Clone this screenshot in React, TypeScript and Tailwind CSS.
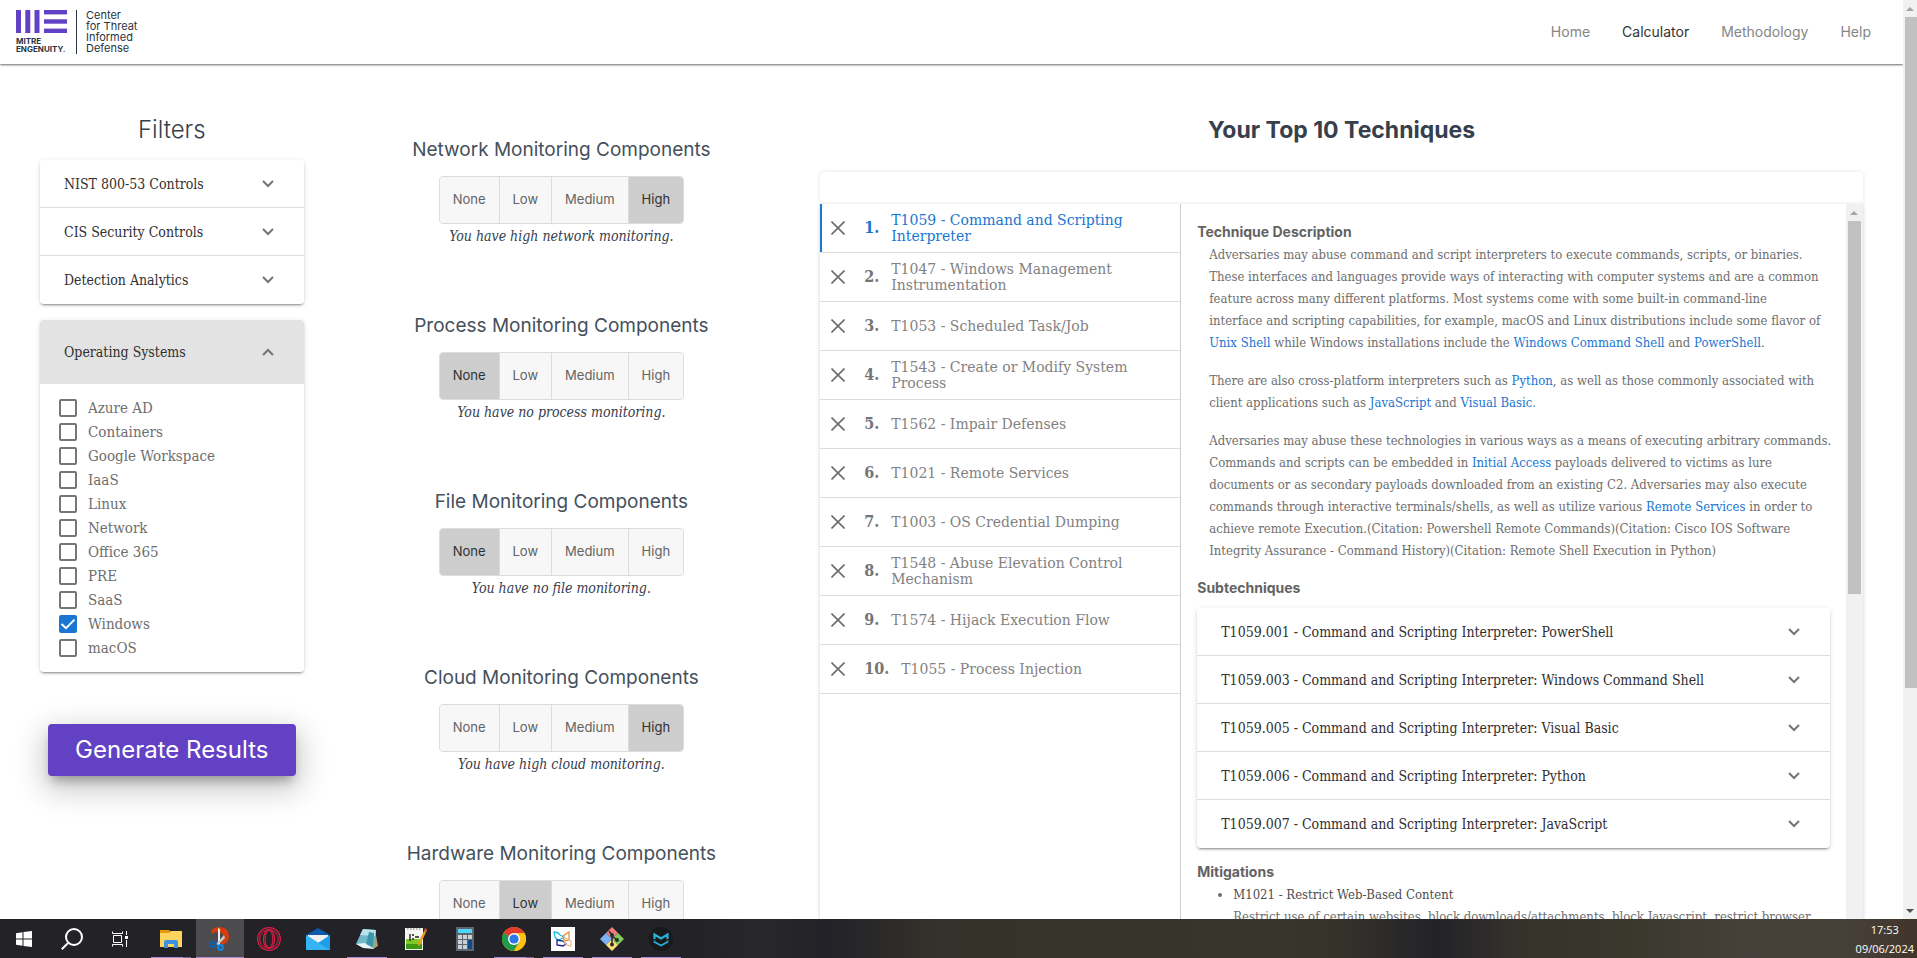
import { useState } from "react";
import type { ReactNode } from "react";

const levels = ["None", "Low", "Medium", "High"];

const monitors = [
  { name: "Network", level: "High" },
  { name: "Process", level: "None" },
  { name: "File", level: "None" },
  { name: "Cloud", level: "High" },
  { name: "Hardware", level: "Low" },
];

const systems = [
  "Azure AD",
  "Containers",
  "Google Workspace",
  "IaaS",
  "Linux",
  "Network",
  "Office 365",
  "PRE",
  "SaaS",
  "Windows",
  "macOS",
];

const techniques = [
  "T1059 - Command and Scripting Interpreter",
  "T1047 - Windows Management Instrumentation",
  "T1053 - Scheduled Task/Job",
  "T1543 - Create or Modify System Process",
  "T1562 - Impair Defenses",
  "T1021 - Remote Services",
  "T1003 - OS Credential Dumping",
  "T1548 - Abuse Elevation Control Mechanism",
  "T1574 - Hijack Execution Flow",
  "T1055 - Process Injection",
];

const subtechniques = [
  "T1059.001 - Command and Scripting Interpreter: PowerShell",
  "T1059.003 - Command and Scripting Interpreter: Windows Command Shell",
  "T1059.005 - Command and Scripting Interpreter: Visual Basic",
  "T1059.006 - Command and Scripting Interpreter: Python",
  "T1059.007 - Command and Scripting Interpreter: JavaScript",
];

const cardShadow =
  "shadow-[0_3px_1px_-2px_rgba(0,0,0,0.2),0_2px_2px_0_rgba(0,0,0,0.14),0_1px_5px_0_rgba(0,0,0,0.12)]";

function Chevron({ up = false }: { up?: boolean }) {
  return (
    <svg width="12" height="8" viewBox="0 0 12 8" fill="none" stroke="#757575" strokeWidth="2" aria-hidden="true">
      <path d={up ? "M1 7 L6 2 L11 7" : "M1 1 L6 6 L11 1"} />
    </svg>
  );
}

function AccordionRow({ label }: { label: string }) {
  return (
    <button type="button" className="flex h-12 w-full items-center justify-between pr-[30px] pl-6 text-left text-sm text-[#303030]">
      <span>{label}</span>
      <Chevron />
    </button>
  );
}

function Logo() {
  return (
    <a href="#home" aria-label="Center for Threat Informed Defense" className="flex items-stretch text-[#2a3440]">
      <span className="flex flex-col gap-1">
        <svg width="51" height="23" viewBox="0 0 51 23" fill="#6241c5" aria-hidden="true">
          <rect x="0" y="0" width="5" height="23" />
          <rect x="9.3" y="0" width="5" height="23" />
          <rect x="18.5" y="0" width="5" height="23" />
          <rect x="28" y="0" width="23" height="4.4" />
          <rect x="28" y="9.3" width="23" height="4.4" />
          <rect x="28" y="18.6" width="23" height="4.4" />
        </svg>
        <span className="text-[8px] leading-[8px] font-bold">
          MITRE
          <br />
          ENGENUITY.
        </span>
      </span>
      <span className="ml-[9px] w-px bg-[#2a3440]" />
      <span className="ml-[9px] text-[11px] leading-[11px]">
        Center
        <br />
        for Threat
        <br />
        Informed
        <br />
        Defense
      </span>
    </a>
  );
}

function Header() {
  const links = ["Home", "Calculator", "Methodology", "Help"];
  return (
    <header className="z-10 flex h-16 shrink-0 items-center justify-between bg-white pr-8 pl-4 shadow-[0_1px_2px_0_rgba(0,0,0,0.6)]">
      <Logo />
      <nav className="flex gap-8 text-sm">
        {links.map((l) => (
          <a key={l} href={"#" + l.toLowerCase()} className={l === "Calculator" ? "text-[#333]" : "text-[#858585]"}>
            {l}
          </a>
        ))}
      </nav>
    </header>
  );
}

function Filters() {
  return (
    <section className="w-[18%] pt-[50px] pr-[39px] pl-10">
      <h2 className="mb-[14px] text-center text-2xl leading-8 font-light text-[#36404c]">Filters</h2>
      <div className={"divide-y divide-[#dedede] rounded bg-white font-['DejaVu_Serif_Condensed','DejaVu_Serif',serif] " + cardShadow}>
        <AccordionRow label="NIST 800-53 Controls" />
        <AccordionRow label="CIS Security Controls" />
        <AccordionRow label="Detection Analytics" />
      </div>
      <div className={"mt-4 overflow-hidden rounded bg-white font-['DejaVu_Serif_Condensed','DejaVu_Serif',serif] " + cardShadow}>
        <button type="button" className="flex h-16 w-full items-center justify-between bg-[#e3e3e3] pr-[30px] pl-6 text-sm text-[#303030]">
          <span>Operating Systems</span>
          <Chevron up />
        </button>
        <div className="py-3 pl-[19px]">
          {systems.map((s) => (
            <label key={s} className="flex h-6 items-center gap-[11px] text-[15px] text-[#6e6e6e]">
              <span className="grid size-[18px] place-items-center">
                <input
                  type="checkbox"
                  defaultChecked={s === "Windows"}
                  className="peer col-start-1 row-start-1 size-[18px] appearance-none rounded-xs border-2 border-[#757575] checked:border-[#1976d2] checked:bg-[#1976d2]"
                />
                <svg
                  width="18"
                  height="18"
                  viewBox="0 0 18 18"
                  fill="none"
                  stroke="#fff"
                  strokeWidth="2"
                  className="pointer-events-none invisible col-start-1 row-start-1 peer-checked:visible"
                  aria-hidden="true"
                >
                  <path d="M2.5 9 L7 13.2 L15.5 4.6" />
                </svg>
              </span>
              {s}
            </label>
          ))}
        </div>
      </div>
      <div className="mt-[52px] px-2">
        <button
          type="button"
          className="h-[52px] w-full rounded bg-[#6241c5] text-2xl text-white shadow-[0_8px_10px_-4px_rgba(0,0,0,0.3),0_10px_30px_4px_rgba(0,0,0,0.22)]"
        >
          Generate Results
        </button>
      </div>
    </section>
  );
}

function Monitor({ name, initial }: { name: string; initial: string }) {
  const [level, setLevel] = useState(initial);
  return (
    <div className="mb-16 flex flex-col items-center">
      <h3 className="text-[19px] leading-7 text-[#45505c]">{name} Monitoring Components</h3>
      <div className="mt-3 flex h-12 divide-x divide-[#dcdcdc] overflow-hidden rounded border border-[#dcdcdc]">
        {levels.map((l) => (
          <button
            key={l}
            type="button"
            aria-pressed={l === level}
            onClick={() => setLevel(l)}
            className={"px-[13px] text-[13px] " + (l === level ? "bg-[#cdcdcd] text-[#303030]" : "bg-[#f7f7f7] text-[#636363]")}
          >
            {l}
          </button>
        ))}
      </div>
      <p className="font-['DejaVu_Serif_Condensed','DejaVu_Serif',serif] text-sm leading-6 text-[#36404c] italic">
        You have {level === "None" ? "no" : level.toLowerCase()} {name.toLowerCase()} monitoring.
      </p>
    </div>
  );
}

function Ref({ children }: { children: ReactNode }) {
  return (
    <a href="#technique" className="text-[#1976d2]">
      {children}
    </a>
  );
}

function ScrollArrow({ down = false, dark = false }: { down?: boolean; dark?: boolean }) {
  return (
    <svg width="8" height="4" viewBox="0 0 8 4" fill={dark ? "#505050" : "#a3a3a3"} aria-hidden="true">
      <path d={down ? "M0 0H8L4 4Z" : "M0 4H8L4 0Z"} />
    </svg>
  );
}

function Results() {
  return (
    <section className="flex w-[59%] flex-col px-10 pt-[50px]">
      <h2 className="text-center text-[23px] leading-8 font-bold text-[#36404c]">Your Top 10 Techniques</h2>
      <div className="mt-[26px] h-8 shrink-0 rounded bg-white shadow-[0_0_4px_0_rgba(0,0,0,0.12)]" />
      <div className="flex min-h-0 flex-1 bg-white shadow-[0_1px_4px_0_rgba(0,0,0,0.2)]">
        <ol className="w-[361px] shrink-0 border-r border-[#d0d0d0] font-['DejaVu_Serif',serif]">
          {techniques.map((t, i) => (
            <li
              key={t}
              className={
                "flex h-[49px] items-center border-b border-[#dcdcdc] pl-[11px] " +
                (i === 0 ? "text-[#1976d2] shadow-[inset_2px_0_0_#1976d2]" : "text-[#828282]")
              }
            >
              <button type="button" aria-label={"Remove " + t} className="mr-[19px]">
                <svg width="14" height="14" viewBox="0 0 14 14" stroke="#6b6b6b" strokeWidth="1.6" aria-hidden="true">
                  <path d="M0.5 0.5 L13.5 13.5 M13.5 0.5 L0.5 13.5" />
                </svg>
              </button>
              <span className={"mr-3 text-base font-bold font-['DejaVu_Serif_Condensed','DejaVu_Serif',serif] " + (i === 0 ? "" : "text-[#757575]")}>
                {i + 1}.
              </span>
              <a href="#technique" className="flex-1 text-sm leading-4">
                {t}
              </a>
            </li>
          ))}
        </ol>
        <article className="min-w-0 flex-1 overflow-hidden px-4 pt-4 font-['DejaVu_Serif_Condensed','DejaVu_Serif',serif] text-[13px] leading-[22px] text-[#6e6e6e]">
          <h3 className="font-['Inter',sans-serif] text-sm leading-6 font-bold text-[#636363]">Technique Description</h3>
          <div className="-mr-3 flex flex-col gap-4 pl-3">
            <p>
              Adversaries may abuse command and script interpreters to execute commands, scripts, or binaries.
              <br />
              These interfaces and languages provide ways of interacting with computer systems and are a common
              <br />
              feature across many different platforms. Most systems come with some built-in command-line
              <br />
              interface and scripting capabilities, for example, macOS and Linux distributions include some flavor of
              <br />
              <Ref>Unix Shell</Ref> while Windows installations include the <Ref>Windows Command Shell</Ref> and{" "}
              <Ref>PowerShell</Ref>.
            </p>
            <p>
              There are also cross-platform interpreters such as <Ref>Python</Ref>, as well as those commonly
              associated with
              <br />
              client applications such as <Ref>JavaScript</Ref> and <Ref>Visual Basic</Ref>.
            </p>
            <p>
              Adversaries may abuse these technologies in various ways as a means of executing arbitrary commands.
              <br />
              Commands and scripts can be embedded in <Ref>Initial Access</Ref> payloads delivered to victims as lure
              <br />
              documents or as secondary payloads downloaded from an existing C2. Adversaries may also execute
              <br />
              commands through interactive terminals/shells, as well as utilize various <Ref>Remote Services</Ref> in
              order to
              <br />
              achieve remote Execution.(Citation: Powershell Remote Commands)(Citation: Cisco IOS Software
              <br />
              Integrity Assurance - Command History)(Citation: Remote Shell Execution in Python)
            </p>
          </div>
          <h3 className="mt-[14px] font-['Inter',sans-serif] text-sm leading-6 font-bold text-[#636363]">Subtechniques</h3>
          <div className={"mt-2 divide-y divide-[#dedede] rounded bg-white " + cardShadow}>
            {subtechniques.map((s) => (
              <AccordionRow key={s} label={s} />
            ))}
          </div>
          <h3 className="mt-3 font-['Inter',sans-serif] text-sm leading-6 font-bold text-[#636363]">Mitigations</h3>
          <ul className="list-disc pl-9">
            <li>
              <strong className="font-medium text-[#4d4d4d]">M1021 - Restrict Web-Based Content</strong>
              <p>Restrict use of certain websites, block downloads/attachments, block Javascript, restrict browser</p>
            </li>
          </ul>
        </article>
        <div className="flex w-[17px] shrink-0 flex-col items-center bg-[#f1f1f1]">
          <div className="flex h-[17px] shrink-0 items-center">
            <ScrollArrow />
          </div>
          <div className="h-[373px] w-[13px] bg-[#c1c1c1]" />
        </div>
      </div>
    </section>
  );
}

const icons: { name: string; art: ReactNode; active?: boolean; open?: boolean; stacked?: boolean }[] = [
  {
    name: "File Explorer",
    open: true,
    stacked: true,
    art: (
      <>
        <path d="M1 3h9l2 2h10v3H1z" fill="#e39b0b" />
        <path d="M1 6h9l2-2h11v16H1z" fill="#ffd560" />
        <path d="M5 21v-6q0-2 2-2h10q2 0 2 2v6h-4v-4H9v4z" fill="#3c92dc" />
      </>
    ),
  },
  {
    name: "Snipping Tool",
    active: true,
    open: true,
    art: (
      <>
        <path d="M3 5q1-5 9-5 9 1 9 9 0 8-8 9l-1-4q4-1 4-4-1-5-7-5-3 0-4 2z" fill="#d63b0b" />
        <path d="M10 1l2 1v16h-2z" fill="#eceff1" />
        <path d="M16 8l1 3-7 7-2-1z" fill="#c4c9cd" />
        <circle cx="5" cy="17.5" r="2.7" fill="none" stroke="#0a63b5" strokeWidth="2.2" />
        <circle cx="12.5" cy="20.5" r="2.3" fill="none" stroke="#1287dd" strokeWidth="2.2" />
      </>
    ),
  },
  {
    name: "Opera",
    art: (
      <g fill="none" stroke="#e21d48">
        <circle cx="12" cy="12" r="11.3" strokeWidth="1.2" />
        <circle cx="12" cy="12" r="9.3" strokeWidth="1" />
        <ellipse cx="12" cy="12" rx="5.5" ry="9.5" strokeWidth="1.2" />
        <ellipse cx="12" cy="12" rx="3.8" ry="8.5" strokeWidth="1" />
      </g>
    ),
  },
  {
    name: "Mail",
    art: (
      <>
        <path d="M0 8L12 1l12 7v3H0z" fill="#0b5cad" />
        <path d="M2 8h20v10H2z" fill="#f1f1f1" />
        <path d="M0 8l12 8 12-8v15H0z" fill="#1e9de8" />
        <path d="M0 8l24 15H0z" fill="#35b5f3" />
      </>
    ),
  },
  {
    name: "Notepad",
    open: true,
    art: (
      <>
        <path d="M20 3l3 16-5 3z" fill="#b59a68" />
        <path d="M8 2l13 1-2 19-18-5z" fill="#6fb9ca" />
        <path d="M8 2l13 1-1 6-15-1z" fill="#b9e3ea" />
        <path d="M1 17l9-1 9 6-11-1z" fill="#e9f3f4" />
        <path d="M14 5l5 1-1 14-7-3z" fill="#3e95aa" />
      </>
    ),
  },
  {
    name: "Notepad++",
    art: (
      <>
        <path d="M1 1h18v22H1z" fill="#f4f6f2" />
        <path d="M2 12h16v10H2z" fill="#7ccb25" />
        <path d="M2 17h16v5H2z" fill="#3c9b12" />
        <path d="M3 2h14" stroke="#777" strokeDasharray="1.5 1.5" />
        <path d="M6 7v7M8 8h2M8 12h2M11 10h4" stroke="#222" strokeWidth="1.4" />
        <path d="M21 2l2 1-7 15-2 1v-3z" fill="#e5a024" />
        <path d="M21 1l2 1-1 3-2-1z" fill="#c3453a" />
      </>
    ),
  },
  {
    name: "Calculator",
    art: (
      <>
        <path d="M3 0h18v24H3z" fill="#5d6670" />
        <path d="M5 2h14v4H5z" fill="#4fd5f7" />
        <path d="M5 8h4v4H5zM10 8h4v4h-4zM15 8h4v4h-4zM5 13h4v4H5zM10 13h4v4h-4zM5 18h4v4H5zM10 18h4v4h-4z" fill="#ccd1d5" />
        <path d="M15 13h4v9h-4z" fill="#0c4c8c" />
      </>
    ),
  },
  {
    name: "Chrome",
    open: true,
    stacked: true,
    art: (
      <>
        <circle cx="12" cy="12" r="12" fill="#fbc116" />
        <path d="M12 12L1.6 6A12 12 0 0 1 22.4 6z" fill="#e33b2e" />
        <path d="M12 12L1.6 6A12 12 0 0 0 12 24l5.2-9z" fill="#229a4b" />
        <path d="M12 6h10.4A12 12 0 0 1 12 24l5.2-9z" fill="#fbc116" />
        <circle cx="12" cy="12" r="6" fill="#fff" />
        <circle cx="12" cy="12" r="4.6" fill="#2f76e8" />
      </>
    ),
  },
  {
    name: "Diagram editor",
    open: true,
    art: (
      <>
        <path d="M0 0h24v24H0z" fill="#fff" />
        <g fill="none" strokeWidth="1.3">
          <path d="M3 5q4 0 6 3l4 2-5 3q-5-1-5-8z" stroke="#17c3e4" />
          <path d="M12 9l6-4v8l-5 1z" stroke="#f08c34" />
          <path d="M6 13l6 1 3 3-3 2-6-1z" stroke="#15208c" />
          <path d="M14 11l6 3v5q-5 0-7-5z" stroke="#f3b98a" />
        </g>
      </>
    ),
  },
  {
    name: "Git",
    open: true,
    art: (
      <>
        <path d="M12 0l6 6-6 6-6-6z" fill="#ef7d7d" />
        <path d="M18 6l6 6-6 6-6-6z" fill="#7fca5a" />
        <path d="M6 6l6 6-6 6-6-6z" fill="#7cb0f7" />
        <path d="M12 12l6 6-6 6-6-6z" fill="#ffe07a" />
        <path d="M9 4l3 4v9M12 9l5 4" stroke="#2b2b2b" strokeWidth="1.5" fill="none" />
        <g fill="#2b2b2b">
          <circle cx="12" cy="8" r="2" />
          <circle cx="17" cy="13" r="2" />
          <circle cx="12" cy="17.5" r="2" />
        </g>
      </>
    ),
  },
  {
    name: "Terminal client",
    open: true,
    art: (
      <>
        <circle cx="12" cy="12" r="12" fill="#17191b" />
        <g fill="none" stroke="#29aed8" strokeWidth="2.2">
          <path d="M5.5 12V7.5l6.500 4 6.500-4V12" />
          <path d="M5.500 13.500v1.500l6.500 3.500 6.500-3.500v-1.500" strokeWidth="1.8" />
        </g>
      </>
    ),
  },
];

function Taskbar() {
  return (
    <footer className="flex h-[39px] shrink-0 items-stretch justify-between bg-[linear-gradient(90deg,#232327_0%,#232327_36%,#28282a_40%,#222228_43%,#34322a_49%,#38352c_67%,#35322b_70%,#222228_75%,#35322b_79%,#3a372d_85%,#45413a_91%,#463f37_97%,#40352a_100%)]">
      <div className="flex">
        <button type="button" aria-label="Start" className="grid w-12 place-items-center">
          <svg width="16" height="16" viewBox="0 0 16 16" fill="#fff" aria-hidden="true">
            <path d="M0 2.2L6.5 1.3V7.5H0zM7.5 1.1L16 0V7.5H7.5zM0 8.5H6.5V14.7L0 13.8zM7.5 8.5H16V16L7.5 14.9z" />
          </svg>
        </button>
        <button type="button" aria-label="Search" className="grid w-12 place-items-center">
          <svg width="22" height="22" viewBox="0 0 22 22" fill="none" stroke="#fff" strokeWidth="2" aria-hidden="true">
            <circle cx="13" cy="9" r="8" />
            <path d="M7.3 14.7L0.8 21.2" />
          </svg>
        </button>
        <button type="button" aria-label="Task view" className="grid w-12 place-items-center">
          <svg width="16" height="16" viewBox="0 0 16 16" fill="none" stroke="#fff" aria-hidden="true">
            <path d="M0.5 0.5V2.5H10.5V0.5M1.5 4.5H9.5V11.5H1.5zM0.5 15.5V13.5H10.5V15.5M14.5 0V4M14.5 9V16" />
            <path d="M13 5h3v3h-3z" fill="#fff" stroke="none" />
          </svg>
        </button>
        <div className="ml-[3px] flex gap-px">
          {icons.map((i) => (
            <button
              key={i.name}
              type="button"
              aria-label={i.name}
              className={"flex w-12 flex-col items-center justify-between pt-2 " + (i.active ? "bg-[#4c4c4f]" : "")}
            >
              <svg width="24" height="24" viewBox="0 0 24 24" aria-hidden="true">
                {i.art}
              </svg>
              {i.open && (
                <span className={"flex h-px justify-end bg-[#a98ad8] " + (i.active ? "w-12" : "w-10")}>
                  {i.stacked && <span className="w-2 bg-[#77629a]" />}
                </span>
              )}
            </button>
          ))}
        </div>
      </div>
      <div className="flex flex-col items-center justify-center pr-[3px] font-['Open_Sans',sans-serif] text-[11px] leading-[19px] text-white">
        <time>17:53</time>
        <time>09/06/2024</time>
      </div>
    </footer>
  );
}

export default function App() {
  return (
    <div className="flex h-screen flex-col overflow-hidden bg-white font-['Inter',sans-serif]">
      <div className="flex min-h-0 flex-1">
        <div className="flex min-w-0 flex-1 flex-col overflow-hidden">
          <Header />
          <main className="flex min-h-0 flex-1">
            <Filters />
            <section className="w-[23%] pt-[72px]">
              {monitors.map((m) => (
                <Monitor key={m.name} name={m.name} initial={m.level} />
              ))}
            </section>
            <Results />
          </main>
        </div>
        <div className="flex w-[14px] shrink-0 flex-col bg-[#f1f1f1]">
          <div className="flex h-[17px] shrink-0 items-center justify-center">
            <ScrollArrow />
          </div>
          <div className="ml-[2px] h-[671px] bg-[#c1c1c1]" />
          <div className="mt-auto flex h-[17px] items-center justify-center">
            <ScrollArrow down dark />
          </div>
        </div>
      </div>
      <Taskbar />
    </div>
  );
}
